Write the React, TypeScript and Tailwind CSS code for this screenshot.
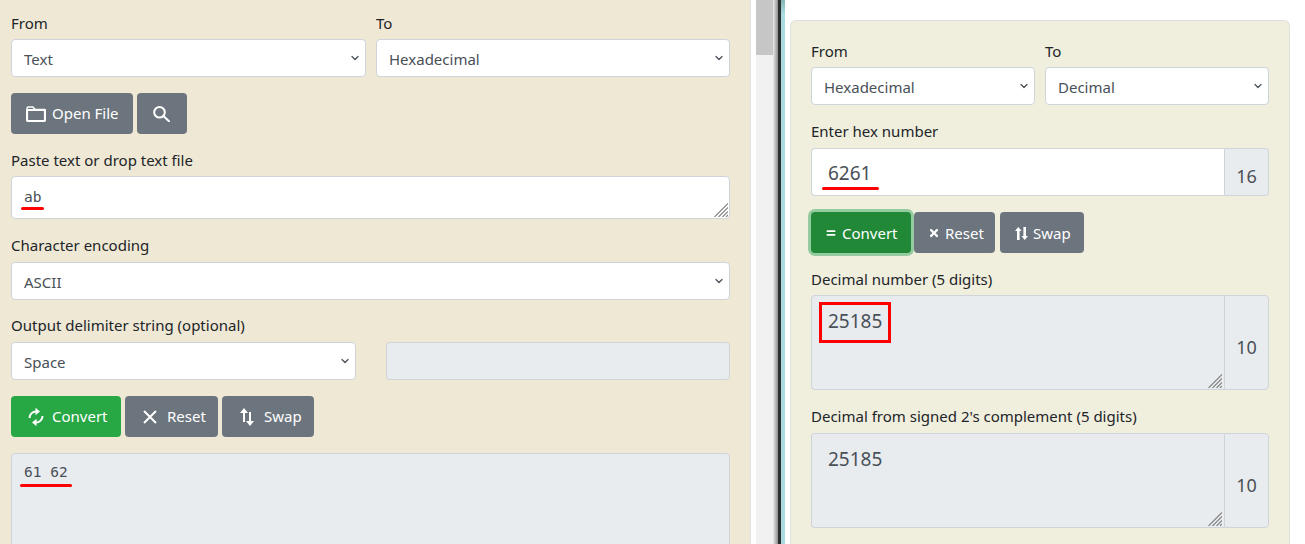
import type { ReactNode } from "react";
import { ChevronDown } from "lucide-react";
import { FaEquals, FaTimes } from "react-icons/fa";

const SANS = "font-['Noto_Sans','Open_Sans',sans-serif]";

function Label({ children }: { children: ReactNode }) {
  return <label className="block h-[17px] text-[15px] leading-[17px] text-[#212529]">{children}</label>;
}

function Select({ value, className = "" }: { value: string; className?: string }) {
  return (
    <div className={`relative ${className}`}>
      <select
        defaultValue={value}
        className="block h-[38px] w-full appearance-none rounded border border-[#ced4da] bg-white pl-3 pt-[2px] text-[15px] text-[#495057] outline-none"
      >
        <option>{value}</option>
      </select>
      <ChevronDown className="pointer-events-none absolute right-[5px] top-[13px] h-[12px] w-[12px] text-[#495057]" strokeWidth={2.5} />
    </div>
  );
}

function Btn({ children, className = "" }: { children: ReactNode; className?: string }) {
  return (
    <button className={`flex h-[41px] items-center rounded bg-[#6c757d] text-[15px] text-white ${className}`}>
      {children}
    </button>
  );
}

function FolderIcon() {
  return (
    <svg viewBox="0 0 20 16" className="h-[16px] w-[20px]" fill="none" stroke="currentColor" strokeWidth="2.2" strokeLinejoin="round">
      <path d="M1 14V2.500A1.500 1.500 0 0 1 2.500 1h4.500l2 2.500h9.500A1.500 1.500 0 0 1 20 5" strokeWidth="1.500" />
      <rect x="1" y="4" width="18" height="11" rx="1.2" />
    </svg>
  );
}

function SearchIcon() {
  return (
    <svg viewBox="0 0 17 16" className="h-[16px] w-[17px]" fill="none" stroke="currentColor" strokeWidth="2">
      <circle cx="6.500" cy="6.300" r="5.300" />
      <path d="M10.400 10 16 15.300" strokeLinecap="round" />
    </svg>
  );
}

function SyncIcon() {
  return (
    <svg viewBox="0 0 16 20" className="h-[20px] w-[16px]" fill="none" stroke="currentColor" strokeWidth="2">
      <path d="M1.500 11A6.500 6.500 0 0 1 8 4.500" />
      <path d="M7.500 0.800 12 4.500 7.500 8.200z" fill="currentColor" stroke="none" />
      <path d="M14.500 9A6.500 6.500 0 0 1 8 15.500" />
      <path d="M8.500 11.800 4 15.500 8.500 19.200z" fill="currentColor" stroke="none" />
    </svg>
  );
}

function CrossIcon() {
  return (
    <svg viewBox="0 0 14 14" className="h-[14px] w-[14px]" fill="none" stroke="currentColor" strokeWidth="2">
      <path d="M1 1 13 13M13 1 1 13" />
    </svg>
  );
}

function SwapIcon() {
  return (
    <svg viewBox="0 0 14 18" className="h-[18px] w-[14px]" fill="currentColor">
      <path d="M3 4h2v10H3zM0 5l4-5 4 5zM9 4h2v10H9zM6 13h8l-4 5z" />
    </svg>
  );
}

function SwapIconBold() {
  return (
    <svg viewBox="0 0 13 13" className="h-[13px] w-[13px]" fill="currentColor">
      <path d="M2 3h2.600v10H2zM0 4l3.300-4 3.300 4zM8.400 0H11v10H8.400zM6.400 9h6.600l-3.300 4z" />
    </svg>
  );
}

function ResizeGrip() {
  return (
    <svg viewBox="0 0 14 14" className="pointer-events-none absolute bottom-[2px] right-[2px] h-[14px] w-[14px]" stroke="#808080" strokeWidth="1.1">
      <path d="M0.500 14 14 0.500M4.500 14 14 4.500M8.500 14 14 8.500M12 14 14 12" />
    </svg>
  );
}

function Underline({ className }: { className: string }) {
  return <div className={`pointer-events-none absolute h-[3px] rounded-sm bg-[#ff0000] ${className}`} />;
}

function Addon({ children, className = "pt-[8px]" }: { children: ReactNode; className?: string }) {
  return (
    <div className={`flex w-[45px] shrink-0 items-center justify-center rounded-r border border-[#ced4da] bg-[#e9ecef] text-[18px] text-[#495057] ${className}`}>
      {children}
    </div>
  );
}

function OutputBox({ value, base }: { value: string; base: string }) {
  return (
    <div className="flex h-[95px]">
      <div className="relative flex-1">
        <textarea
          readOnly
          defaultValue={value}
          className="block h-full w-full resize-none rounded-l border border-r-0 border-[#ced4da] bg-[#e9ecef] px-4 pb-2 pt-[12px] text-[19px] leading-[26px] text-[#495057] outline-none"
        />
        <ResizeGrip />
      </div>
      <Addon className="pt-[10px]">{base}</Addon>
    </div>
  );
}

function LeftPanel() {
  return (
    <div className="h-[544px] w-[751px] shrink-0 overflow-hidden border-r border-[#e2e2e0] bg-[#efe8d5] pl-[11px] pr-[20px] pt-[15px]">
      <div className="grid grid-cols-[355px_354px] gap-x-[10px]">
        <Label>From</Label>
        <Label>To</Label>
        <Select value="Text" className="mt-[7px]" />
        <Select value="Hexadecimal" className="mt-[7px]" />
      </div>
      <div className="mt-[16px] flex gap-[4px]">
        <Btn className="w-[122px] gap-[6px] pl-[15px]">
          <FolderIcon />
          Open File
        </Btn>
        <Btn className="w-[50px] pl-[16px]">
          <SearchIcon />
        </Btn>
      </div>
      <div className="mt-[18px]">
        <Label>Paste text or drop text file</Label>
      </div>
      <div className="relative mt-[7px]">
        <textarea
          defaultValue="ab"
          className="block h-[43px] w-full resize-none rounded border border-[#ced4da] bg-white px-3 pt-[9px] font-['DejaVu_Sans_Mono',monospace] text-[14.5px] leading-[22px] text-[#495057] outline-none"
        />
        <ResizeGrip />
        <Underline className="left-[10px] top-[31px] w-[23px]" />
      </div>
      <div className="mt-[18px]">
        <Label>Character encoding</Label>
      </div>
      <Select value="ASCII" className="mt-[8px]" />
      <div className="mt-[17px]">
        <Label>Output delimiter string (optional)</Label>
      </div>
      <div className="mt-[8px] flex gap-[30px]">
        <Select value="Space" className="w-[345px] shrink-0" />
        <div className="h-[38px] flex-1 rounded border border-[#ced4da] bg-[#e9ecef]" />
      </div>
      <div className="mt-[16px] flex gap-[4px]">
        <Btn className="w-[110px] gap-[8px] !bg-[#28a745] pl-[17px]">
          <SyncIcon />
          Convert
        </Btn>
        <Btn className="w-[93px] gap-[10px] pl-[18px]">
          <CrossIcon />
          Reset
        </Btn>
        <Btn className="w-[92px] gap-[10px] pl-[18px]">
          <SwapIcon />
          Swap
        </Btn>
      </div>
      <div className="relative mt-[16px]">
        <textarea
          readOnly
          defaultValue="61 62"
          className="block h-[200px] w-full resize-none rounded border border-[#ced4da] bg-[#e9ecef] px-3 py-[7px] font-['DejaVu_Sans_Mono',monospace] text-[14.5px] leading-[22px] text-[#495057] outline-none"
        />
        <Underline className="left-[9px] top-[31px] w-[52px]" />
      </div>
    </div>
  );
}

// scrollbar of the left window and the edge of the window beside it
function Divider() {
  return (
    <div className="flex h-[544px] w-[39px] shrink-0">
      <div className="w-[5px] bg-white" />
      <div className="w-[17px] bg-[#f1f1f1]">
        <div className="h-[55px] bg-[#c6c6c6]" />
      </div>
      <div className="w-[5px] bg-linear-to-r from-[#ececec] to-[#8f8f8f]" />
      <div className="w-[3px] bg-[#2b2f30]" />
      <div className="w-[4px] bg-linear-to-b from-[#86b4b6] to-[#a9dcdf] to-[14px]" />
      <div className="w-[5px] bg-white" />
    </div>
  );
}

function RightPanel() {
  return (
    <div className="flex-1 bg-white pr-[15px] pt-[20px]">
      <div className="h-[524px] overflow-hidden rounded-t-md border border-b-0 border-[#dfdfdb] bg-[#f0eedd] px-[20px] pt-[22px]">
        <div className="grid grid-cols-[224px_224px] gap-x-[10px]">
          <Label>From</Label>
          <Label>To</Label>
          <Select value="Hexadecimal" className="mt-[7px]" />
          <Select value="Decimal" className="mt-[7px]" />
        </div>
        <div className="mt-[18px]">
          <Label>Enter hex number</Label>
        </div>
        <div className="relative mt-[8px] flex h-[48px]">
          <div className="flex flex-1 items-center rounded-l border border-r-0 border-[#ced4da] bg-white px-4 pt-[3px] text-[19px] text-[#495057]">6261</div>
          <Addon>16</Addon>
          <Underline className="left-[11px] top-[39px] w-[57px]" />
        </div>
        <div className="mt-[16px] flex gap-[3px]">
          <Btn className="w-[100px] gap-[6px] !bg-[#218838] pl-[15px] pt-[1px] ring-[3px] ring-[#94cc9f]">
            <FaEquals className="h-[10px] w-[10px]" />
            Convert
          </Btn>
          <Btn className="w-[81px] gap-[6px] pl-[15px] pt-[1px]">
            <FaTimes className="h-[12px] w-[10px]" />
            Reset
          </Btn>
          <Btn className="ml-[2px] w-[84px] gap-[5px] pl-[15px] pt-[1px]">
            <SwapIconBold />
            Swap
          </Btn>
        </div>
        <div className="mt-[18px]">
          <Label>Decimal number (5 digits)</Label>
        </div>
        <div className="relative mt-[7px]">
          <OutputBox value="25185" base="10" />
          <div className="pointer-events-none absolute left-[8px] top-[7px] h-[41px] w-[72px] border-[3px] border-[#ff0000]" />
        </div>
        <div className="mt-[18px]">
          <Label>Decimal from signed 2's complement (5 digits)</Label>
        </div>
        <div className="mt-[8px]">
          <OutputBox value="25185" base="10" />
        </div>
      </div>
    </div>
  );
}

export default function App() {
  return (
    <div className={`flex h-[544px] w-[1305px] overflow-hidden bg-white ${SANS}`}>
      <LeftPanel />
      <Divider />
      <RightPanel />
    </div>
  );
}
